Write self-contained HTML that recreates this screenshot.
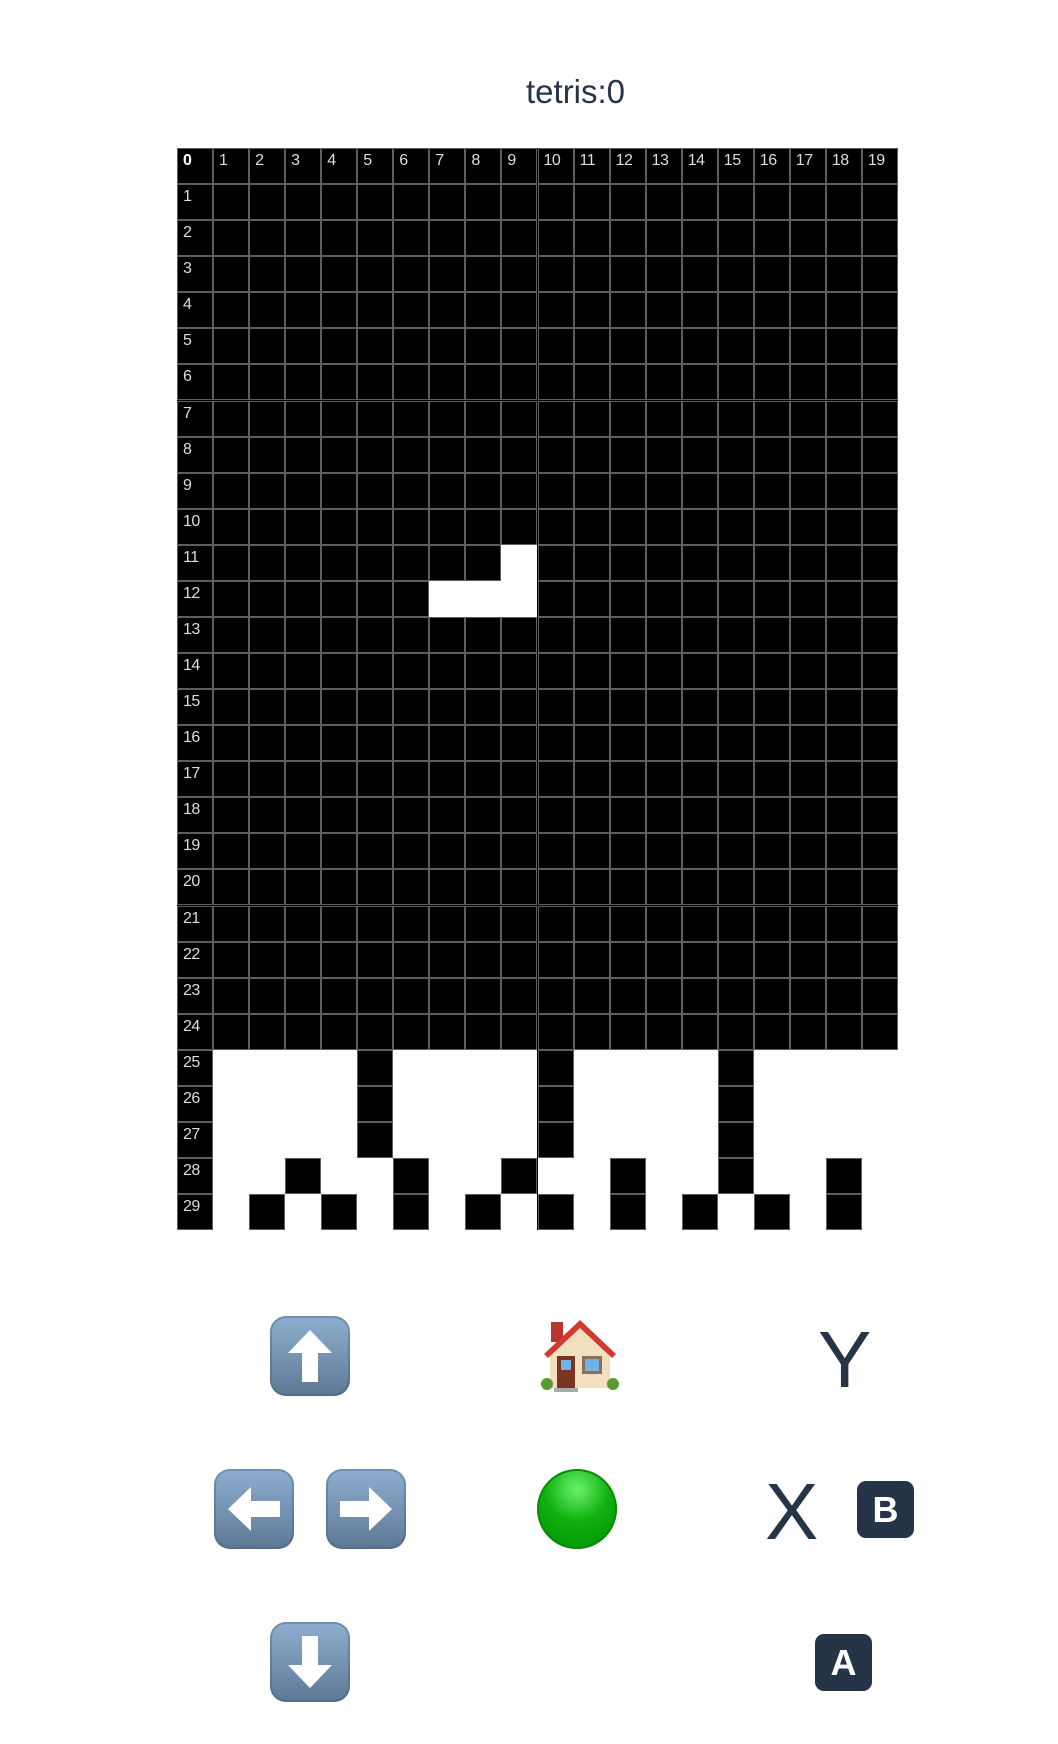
<!DOCTYPE html>
<html><head><meta charset="utf-8"><style>
html,body{margin:0;padding:0;background:#fff;width:1058px;height:1744px;overflow:hidden;position:relative;font-family:"Liberation Sans",sans-serif;}
#t{position:absolute;left:526px;top:74px;font-size:33px;color:#253447;line-height:36px;white-space:nowrap;}
#g{position:absolute;left:177px;top:148px;width:721px;height:1082px;background:#000;}
.c{position:absolute;width:36px;height:36px;box-sizing:border-box;border:1px solid #5e5e5e;}
.l{color:#ddd;font-size:16px;line-height:17px;padding:3px 0 0 5px;letter-spacing:-0.5px;}
.btn{position:absolute;width:80px;height:80px;border-radius:16px;background:linear-gradient(#8eafd0,#5d7895);box-shadow:inset 0 0 0 2px rgba(60,90,120,.35);}
.btn svg{position:absolute;left:0;top:0}
.key{position:absolute;width:57px;height:57px;border-radius:9px;background:#253447;color:#fff;font-weight:bold;font-size:36px;text-align:center;line-height:58px;}
.big{position:absolute;font-size:80px;color:#253447;line-height:80px;}
</style></head><body>
<div id="t">tetris:0</div>
<div id="g"></div>

<div class="btn" style="left:270px;top:1316px"><svg width="80" height="80"><polygon points="40,14 62,37 48,37 48,66 32,66 32,37 18,37" fill="#fff"/></svg></div>
<div class="btn" style="left:214px;top:1469px"><svg width="80" height="80"><polygon points="14,40 37,18 37,32 66,32 66,48 37,48 37,62" fill="#fff"/></svg></div>
<div class="btn" style="left:326px;top:1469px"><svg width="80" height="80"><polygon points="66,40 43,18 43,32 14,32 14,48 43,48 43,62" fill="#fff"/></svg></div>
<div class="btn" style="left:270px;top:1622px"><svg width="80" height="80"><polygon points="40,66 62,43 48,43 48,14 32,14 32,43 18,43" fill="#fff"/></svg></div>

<svg style="position:absolute;left:540px;top:1316px" width="80" height="80" viewBox="0 0 80 80">
<rect x="11" y="6" width="12" height="20" fill="#b8342c"/>
<polygon points="10,34 40,8 70,34 70,72 10,72" fill="#f1dfc0"/>
<polygon points="4,38 40,4 76,38 72,42 40,12 8,42" fill="#d23a30"/>
<rect x="17" y="40" width="18" height="32" fill="#7b3322"/>
<rect x="21" y="44" width="10" height="10" fill="#6fb4e8"/>
<rect x="42" y="40" width="20" height="18" fill="#8b6f5a"/>
<rect x="45" y="43" width="14" height="12" fill="#6fb4e8"/>
<circle cx="7" cy="68" r="6" fill="#5a9a32"/><circle cx="73" cy="68" r="6" fill="#5a9a32"/>
<rect x="14" y="72" width="24" height="4" fill="#aaa"/>
</svg>

<div style="position:absolute;left:537px;top:1469px;width:80px;height:80px;border-radius:50%;background:radial-gradient(circle at 50% 25%,#6cf26c 0%,#10b010 45%,#008f00 100%);box-shadow:inset 0 0 0 2px #0a8a0a"></div>

<div class="big" style="left:818px;top:1320px">Y</div>
<div class="big" style="left:765px;top:1472px">X</div>
<div class="key" style="left:857px;top:1481px">B</div>
<div class="key" style="left:815px;top:1634px">A</div>

<script>
var g=document.getElementById('g'),W=36.05,H=36.07,h='';
var white={};
white['11,9']=1;white['12,7']=1;white['12,8']=1;white['12,9']=1;
var blk={};
[[25,5],[26,5],[27,5],[25,10],[26,10],[27,10],[25,15],[26,15],[27,15],[28,15],
[28,3],[28,6],[28,9],[28,12],[28,18],[29,2],[29,4],[29,6],[29,8],[29,10],[29,12],[29,14],[29,16],[29,18]].forEach(function(p){blk[p[0]+','+p[1]]=1;});
for(var r=0;r<30;r++)for(var c=0;c<20;c++){
 var k=r+','+c,lab=(r==0||c==0),isW;
 if(lab)isW=false;else if(r>=25)isW=!blk[k];else isW=!!white[k];
 var st='left:'+(c*W).toFixed(1)+'px;top:'+(r*H).toFixed(1)+'px;';
 if(isW)st+='background:#fff;border:none;';
 var txt='';
 if(r==0&&c==0)txt='<b style="color:#fff">0</b>';else if(r==0)txt=c;else if(c==0)txt=r;
 h+='<div class="c'+(lab?' l':'')+'" style="'+st+'">'+txt+'</div>';
}
g.innerHTML=h;
</script>
</body></html>
